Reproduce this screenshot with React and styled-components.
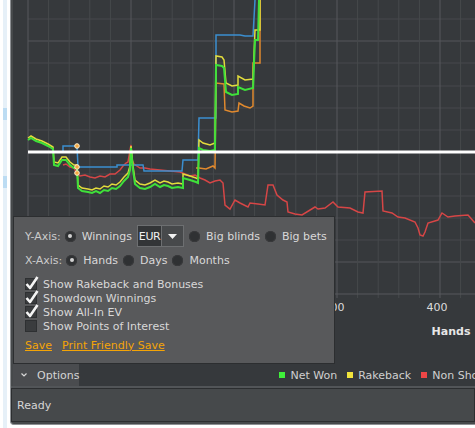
import React from "react"
import styled, { createGlobalStyle } from "styled-components"

const GlobalStyle = createGlobalStyle`
html, body {
  margin: 0;
  padding: 0;
  background: #fff;
}
body {
  font-family: "DejaVu Sans", Verdana, sans-serif;
  font-size: 11px;
}
`

// page coords: the plot svg starts at x=13
const green = "28,140 31,138 36,141 42,143 48,146 53,149 54,165 58,166 62,160 66,160 70,165 74,168 77,168 78,188 82,191 88,192 92,193 96,191 100,193 104,190 108,191 112,188 116,189 120,186 124,181 128,177 130,170 131,148 133,170 135,184 140,188 145,189 150,187 155,184 160,187 164,185 168,186 172,188 178,187 183,188 183,178 190,180 196,182 198,183 199,148 203,150 210,151 215,150 216,65 222,66 224,68 226,92 232,95 238,94 238,87 245,90 253,88 255,40 258,40 259,0"
const yellow = "28,138 31,136 36,139 42,141 48,144 53,147 54,162 58,163 62,157 66,157 70,162 74,165 77,165 78,185 82,188 88,189 92,190 96,188 100,189 104,186 108,187 112,184 116,185 120,182 124,177 128,173 130,166 131,146 133,166 135,180 140,184 145,185 150,183 155,180 160,183 164,181 168,182 172,184 178,183 183,184 183,174 190,176 196,178 198,179 199,140 203,143 210,145 215,143 216,56 222,57 224,60 226,83 232,86 238,85 238,76 245,80 253,79 255,30 260,30 260,0"
const orange = "196,168 199,168 206,169 213,166 215,168 216,83 224,84 225,110 232,112 238,111 239,103 244,106 250,108 253,106 253,63 260,63 260,0"
const blue = "63,152 63,146 77,146 78,167 117,167 117,165 143,165 144,171 182,171 183,160 198,160 199,118 216,118 216,35 240,35 245,36 253,36 255,0"
const red = "63,165 66,164 70,167 74,168 76,172 80,176 85,175 90,177 95,178 100,176 105,177 110,174 115,174 120,170 123,166 126,163 128,162 131,145 132,160 134,164 140,168 145,168 150,169 160,170 170,171 180,172 185,174 190,176 195,175 200,178 205,180 210,183 215,181 220,180 223,183 225,205 230,209 235,200 240,203 248,207 250,203 258,204 265,205 268,185 273,185 277,195 283,200 287,202 288,212 295,214 302,215 315,207 318,209 325,208 333,202 338,207 350,208 358,212 363,213 365,192 382,191 383,211 392,213 398,217 405,218 415,222 418,228 420,235 423,236 425,232 428,223 438,220 442,213 448,217 455,216 468,215 475,223"

const vLines = Array.from({ length: 23 }, (_, k) => ({ x: 28 + k * 20.6, major: k % 5 === 0 }))
const hLines = [19, 41, 63, 86, 108, 130, 174, 196, 218, 240, 262]

export default function App() {
  return (
    <>
      <GlobalStyle />
      <Page>
        <BackStrip>
          <Glint />
          <Glint />
        </BackStrip>
        <Window>
          <ChartArea>
            <Plot width="462" height="364" viewBox="13 0 462 364">
              {hLines.map(y => (
                <line key={y} x1="28" x2="475" y1={y} y2={y} stroke={y === 41 || y === 262 ? "#54575a" : "#46494c"} strokeWidth="1" />
              ))}
              {vLines.map(l => (
                <line key={l.x} x1={l.x} x2={l.x} y1="0" y2="298" stroke={l.major ? "#56595c" : "#46494c"} strokeWidth="1" />
              ))}
              <line x1="28" x2="475" y1="294" y2="294" stroke="#56595c" strokeWidth="1" />
              <polyline points={red} fill="none" stroke="#d64646" strokeWidth="1.5" />
              <polyline points={blue} fill="none" stroke="#3b8fd0" strokeWidth="1.5" />
              <polyline points={orange} fill="none" stroke="#e0892e" strokeWidth="1.5" />
              <polyline points={yellow} fill="none" stroke="#e2dc3c" strokeWidth="1.5" />
              <polyline points={green} fill="none" stroke="#3fe03a" strokeWidth="2" />
              <line x1="28" x2="475" y1="152" y2="152" stroke="#ffffff" strokeWidth="3" />
              {[146, 167, 173].map(y => (
                <circle key={y} cx="77" cy={y} r="2.3" fill="#f4a640" stroke="#fff2d0" strokeWidth="1" />
              ))}
              <AxisText x="334" y="311" textAnchor="middle">300</AxisText>
              <AxisText x="437" y="311" textAnchor="middle">400</AxisText>
              <AxisTitle x="451" y="335" textAnchor="middle">Hands</AxisTitle>
            </Plot>
            <BottomRow>
              <OptionsTab>
                <svg width="6" height="4" viewBox="0 0 6 4">
                  <polyline points="0.5,0.5 3,3 5.5,0.5" fill="none" stroke="#d8d8d8" strokeWidth="1.2" />
                </svg>
                <span>Options</span>
              </OptionsTab>
              <Legend>
                <LegendItem><Swatch $color="#3ff03a" />Net Won</LegendItem>
                <LegendItem><Swatch $color="#f0e43c" />Rakeback</LegendItem>
                <LegendItem><Swatch $color="#ee4646" />Non Showdown Won</LegendItem>
              </Legend>
            </BottomRow>
            <Panel>
              <Row $h={22} $mt={0}>
                <AxisLabel>Y-Axis:</AxisLabel>
                <Choice><Radio $checked />Winnings</Choice>
                <Dropdown>
                  <DropValue>EUR</DropValue>
                  <DropArrow>
                    <svg width="9" height="5" viewBox="0 0 9 5">
                      <polygon points="0,0 9,0 4.5,5" fill="#f2f2f2" />
                    </svg>
                  </DropArrow>
                </Dropdown>
                <Choice><Radio />Big blinds</Choice>
                <Choice><Radio />Big bets</Choice>
              </Row>
              <Row $h={16} $mt={5}>
                <AxisLabel>X-Axis:</AxisLabel>
                <Choice><Radio $checked />Hands</Choice>
                <Choice><Radio />Days</Choice>
                <Choice><Radio />Months</Choice>
              </Row>
              <CheckList>
                <CheckRow><Check on />Show Rakeback and Bonuses</CheckRow>
                <CheckRow><Check on />Showdown Winnings</CheckRow>
                <CheckRow><Check on />Show All-In EV</CheckRow>
                <CheckRow><Check />Show Points of Interest</CheckRow>
              </CheckList>
              <Row $h={14} $mt={5}>
                <Link>Save</Link>
                <Link>Print Friendly Save</Link>
              </Row>
            </Panel>
          </ChartArea>
          <Status>Ready</Status>
        </Window>
      </Page>
    </>
  )
}

function Check({ on }) {
  return (
    <CheckBox>
      {on && (
        <svg width="14" height="15" viewBox="0 0 14 15">
          <polyline points="1.5,8 5,12 12.5,1" fill="none" stroke="#f4f4f4" strokeWidth="2.6" strokeLinejoin="round" />
        </svg>
      )}
    </CheckBox>
  )
}

const Page = styled.div`
display: flex;
width: 475px;
height: 428px;
overflow: hidden;
background: #fff;
`

const BackStrip = styled.div`
flex: 0 0 10px;
display: flex;
flex-direction: column;
gap: 56px;
padding-top: 108px;
box-sizing: border-box;
background: linear-gradient(to right, #fff 0 3px, #e6f0f8 3px 7px, #fff 7px 10px);
`

const Glint = styled.div`
width: 4px;
height: 12px;
margin-left: 3px;
background: #bcdcf3;
`

const Window = styled.div`
flex: 0 0 465px;
height: 425px;
box-sizing: border-box;
display: flex;
flex-direction: column;
padding: 0 0 2px 2px;
background: #46494b;
border-left: 1px solid #8d9093;
border-bottom: 1px solid #8d9093;
border-bottom-left-radius: 4px;
overflow: hidden;
`

const ChartArea = styled.div`
position: relative;
height: 386px;
flex: none;
display: flex;
flex-direction: column;
background: #36393c;
color: #d6d6d6;
`

const Plot = styled.svg`
display: block;
flex: none;
`

const AxisText = styled.text`
font-family: "DejaVu Sans", Verdana, sans-serif;
font-size: 11px;
fill: #dcdcdc;
`

const AxisTitle = styled.text`
font-family: "DejaVu Sans", Verdana, sans-serif;
font-size: 11px;
font-weight: bold;
fill: #e6e6e6;
`

const BottomRow = styled.div`
display: flex;
align-items: center;
height: 22px;
white-space: nowrap;
`

const OptionsTab = styled.div`
display: flex;
align-items: center;
gap: 10px;
width: 70px;
height: 100%;
box-sizing: border-box;
padding-left: 8px;
background: #4a4c4f;
color: #d4d4d4;
`

const Legend = styled.div`
display: flex;
align-items: center;
gap: 10px;
margin-left: 200px;
color: #d0d0d0;
`

const LegendItem = styled.span`
display: flex;
align-items: center;
gap: 5px;
`

const Swatch = styled.span`
width: 6px;
height: 6px;
background: ${props => props.$color};
`

const Panel = styled.div`
position: absolute;
left: 0;
top: 216px;
width: 322px;
height: 148px;
box-sizing: border-box;
padding: 8px 11px 0;
background: #58595b;
border: 1px solid #2c2e30;
color: #d8d8d8;
white-space: nowrap;
`

const Row = styled.div`
display: flex;
align-items: center;
gap: ${props => (props.$h === 14 ? "10px" : "0")};
height: ${props => props.$h}px;
margin-top: ${props => props.$mt}px;
`

const AxisLabel = styled.span`
color: #cbcbcb;
margin-right: 4px;
`

const Choice = styled.span`
display: flex;
align-items: center;
gap: 6px;
margin-right: 5px;
`

const Radio = styled.span`
display: flex;
align-items: center;
justify-content: center;
width: 11px;
height: 11px;
flex: none;
border-radius: 50%;
background: #2f3133;
box-shadow: inset 0 0 0 1px #38393b;
&::after {
  content: "";
  width: 4px;
  height: 4px;
  border-radius: 50%;
  background: ${props => (props.$checked ? "#d2d2d2" : "transparent")};
}
`

const Dropdown = styled.div`
display: flex;
height: 22px;
box-sizing: border-box;
margin-right: 5px;
border: 1px solid #6d6f71;
`

const DropValue = styled.span`
display: flex;
align-items: center;
justify-content: center;
width: 23px;
background: #333537;
border-right: 1px solid #6d6f71;
color: #f0f0f0;
letter-spacing: -0.4px;
`

const DropArrow = styled.span`
display: flex;
align-items: center;
justify-content: center;
width: 21px;
background: #47494b;
`

const CheckList = styled.div`
display: flex;
flex-direction: column;
margin-top: 9px;
`

const CheckRow = styled.div`
display: flex;
align-items: center;
gap: 6px;
height: 14px;
`

const CheckBox = styled.span`
position: relative;
display: flex;
align-items: flex-end;
width: 12px;
height: 12px;
flex: none;
box-sizing: border-box;
background: #3a3c3e;
border: 1px solid #2e3032;
svg {
  margin: 0 0 -2px -1px;
  overflow: visible;
}
`

const Link = styled.span`
color: #f4a406;
text-decoration: underline;
`

const Status = styled.div`
display: flex;
align-items: center;
height: 34px;
flex: none;
box-sizing: border-box;
margin: 2px 0 0 -2px;
padding-left: 5px;
background: #46494b;
border: 1px solid #2c2e30;
box-shadow: 0 -2px 0 #525558;
color: #d6d6d6;
`
